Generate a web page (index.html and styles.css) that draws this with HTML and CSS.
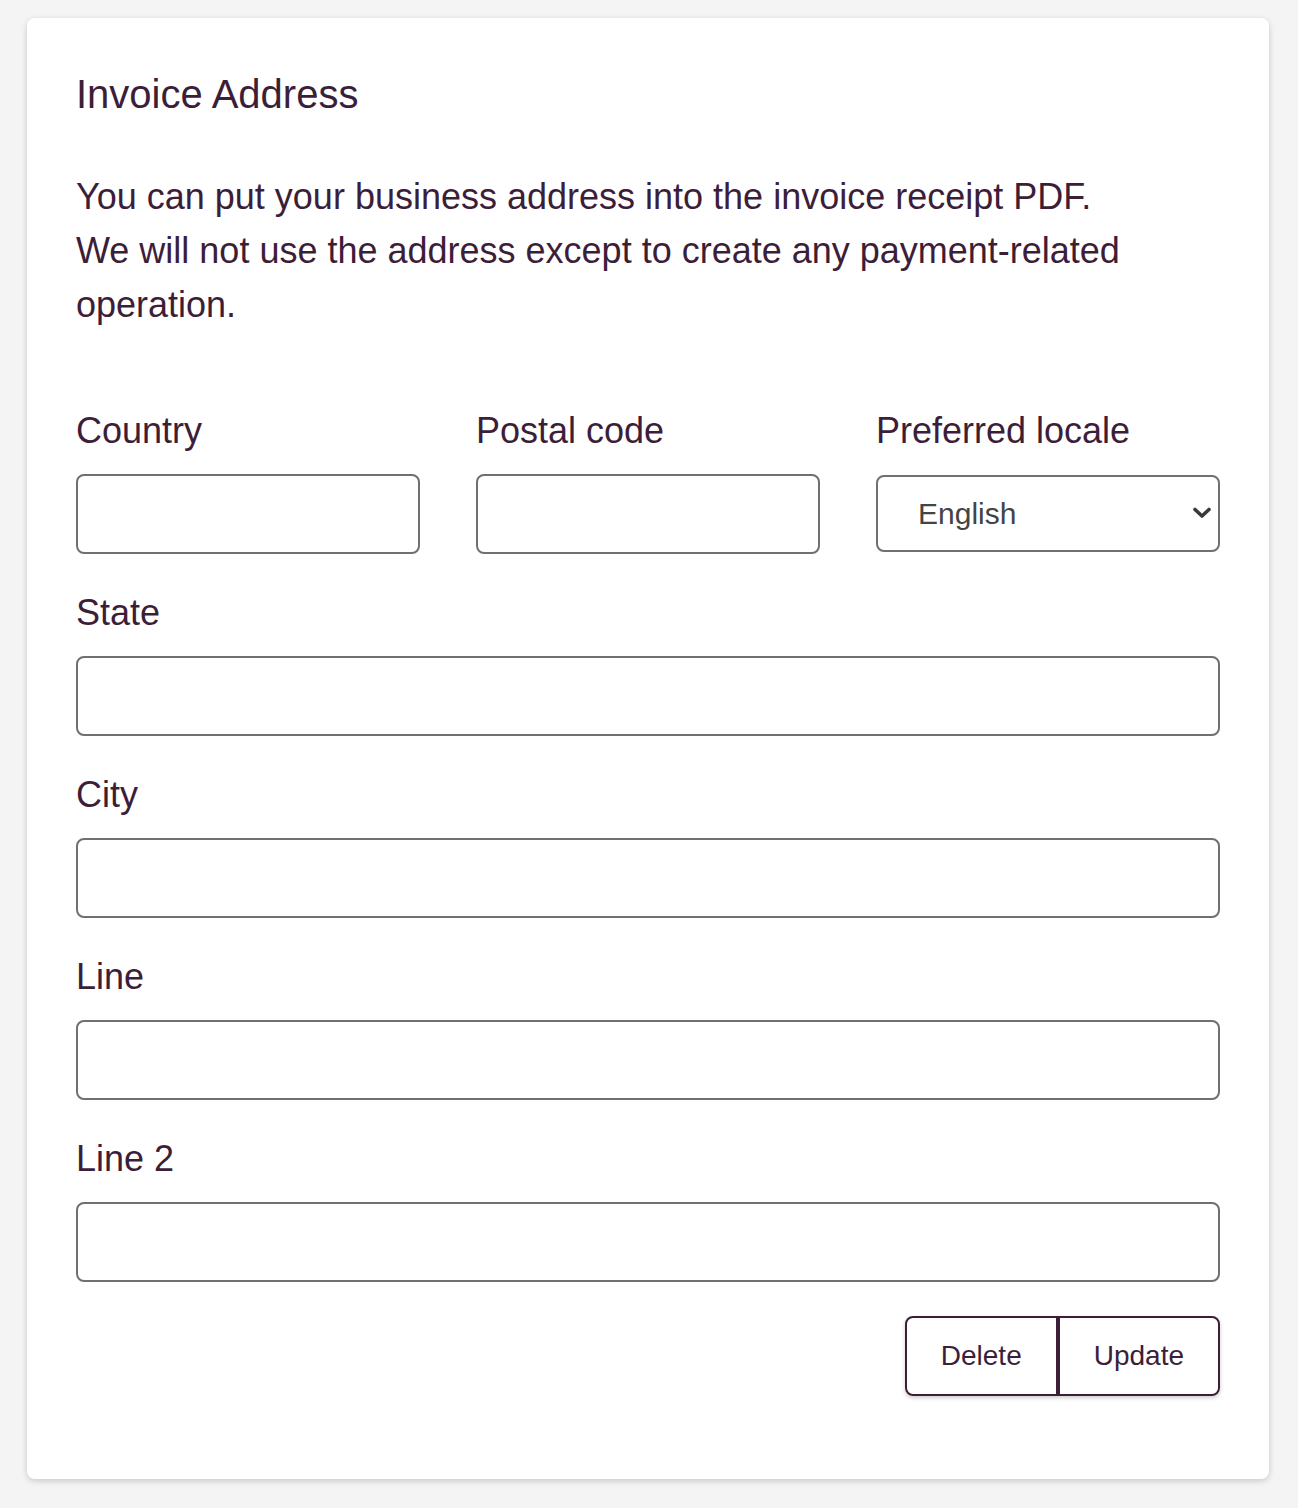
FILE: index.html
```html
<!DOCTYPE html>
<html lang="en">
<head>
  <meta charset="UTF-8">
  <meta name="viewport" content="width=device-width, initial-scale=1.0">
  <title>Invoice Address</title>
  <link rel="stylesheet" href="styles.css">
</head>
<body>
  <div class="card">
    <h2 class="card-title">Invoice Address</h2>
    <p class="card-text">
      You can put your business address into the invoice receipt PDF.<br>
      We will not use the address except to create any payment-related operation.
    </p>

    <form class="address-form">
      <div class="form-row">
        <div class="field">
          <label class="field-label" for="country">Country</label>
          <input type="text" id="country" class="field-input">
        </div>
        <div class="field">
          <label class="field-label" for="postal">Postal code</label>
          <input type="text" id="postal" class="field-input">
        </div>
        <div class="field">
          <label class="field-label" for="locale">Preferred locale</label>
          <div class="select-wrap">
            <select id="locale" class="field-select">
              <option>English</option>
              <option>日本語</option>
            </select>
            <svg class="select-arrow" width="20" height="12" viewBox="0 0 20 12">
              <path d="M3 2.5 L10 9 L17 2.5" fill="none" stroke="#3a3a3a" stroke-width="3.6" stroke-linecap="round" stroke-linejoin="round"/>
            </svg>
          </div>
        </div>
      </div>

      <div class="field">
        <label class="field-label" for="state">State</label>
        <input type="text" id="state" class="field-input">
      </div>

      <div class="field">
        <label class="field-label" for="city">City</label>
        <input type="text" id="city" class="field-input">
      </div>

      <div class="field">
        <label class="field-label" for="line1">Line</label>
        <input type="text" id="line1" class="field-input">
      </div>

      <div class="field">
        <label class="field-label" for="line2">Line 2</label>
        <input type="text" id="line2" class="field-input">
      </div>

      <div class="form-actions">
        <div class="button-group">
          <button type="button" class="btn">Delete</button>
          <button type="button" class="btn">Update</button>
        </div>
      </div>
    </form>
  </div>
</body>
</html>
```

FILE: styles.css
```css
:root {
  --text: #3c1e39;
  --muted: #444444;
  --border: #707070;
  --bg: #f4f4f4;
  --card: #ffffff;
  --radius: 8px;
}

* {
  margin: 0;
  padding: 0;
  box-sizing: border-box;
  font-family: "Liberation Sans", Arial, sans-serif;
}

body {
  background: var(--bg);
  color: var(--text);
  padding: 18px 29px 28px 27px;
}

.card {
  background: var(--card);
  border-radius: var(--radius);
  box-shadow: 0 2px 6px rgba(0, 0, 0, 0.18);
  padding: 46px 49px 83px;
}

.card-title {
  font-size: 40px;
  font-weight: 400;
  line-height: 60px;
  margin-bottom: 46px;
}

.card-text {
  font-size: 36px;
  line-height: 54px;
  margin-bottom: 72px;
}

.address-form {
  display: flex;
  flex-direction: column;
  gap: 32px;
}

.form-row {
  display: grid;
  grid-template-columns: repeat(3, minmax(0, 1fr));
  gap: 56px;
}

.field {
  display: flex;
  flex-direction: column;
  min-width: 0;
}

.field-label {
  font-size: 36px;
  line-height: 54px;
  margin-bottom: 16px;
  white-space: nowrap;
}

.field-input {
  width: 100%;
  height: 80px;
  border: 2px solid var(--border);
  border-radius: var(--radius);
  padding: 0 20px;
  font-size: 30px;
  color: var(--muted);
  background: #fff;
}

.select-wrap {
  position: relative;
  margin-top: 1px;
}

.field-select {
  width: 100%;
  height: 77px;
  border: 2px solid var(--border);
  border-radius: var(--radius);
  padding: 0 40px;
  font-size: 30px;
  color: var(--muted);
  background: #fff;
  appearance: none;
  -webkit-appearance: none;
}

.select-arrow {
  position: absolute;
  right: 8px;
  top: 32px;
  pointer-events: none;
}

.form-actions {
  display: flex;
  justify-content: flex-end;
  margin-top: 2px;
}

.button-group {
  display: flex;
  box-shadow: 0 2px 4px rgba(0, 0, 0, 0.2);
  border-radius: var(--radius);
}

.btn {
  height: 80px;
  padding: 0 34px;
  border: 2px solid var(--text);
  background: #fff;
  color: var(--text);
  font-size: 28px;
  cursor: pointer;
}

.btn:first-child {
  border-radius: var(--radius) 0 0 var(--radius);
}

.btn:last-child {
  border-radius: 0 var(--radius) var(--radius) 0;
}
```
